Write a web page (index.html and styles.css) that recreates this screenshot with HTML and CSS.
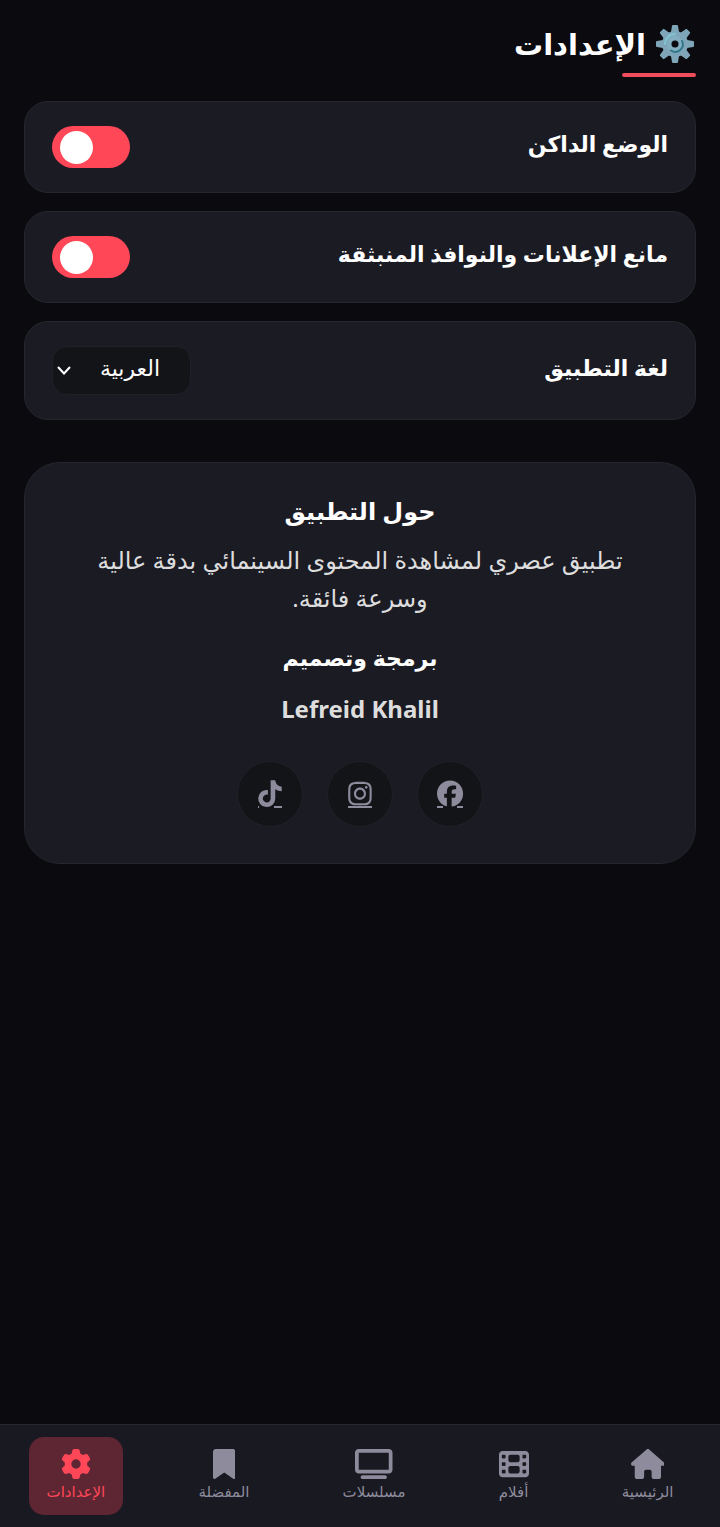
FILE: index.html
```html
<!DOCTYPE html>
<html lang="ar" dir="rtl">
<head>
    <meta charset="UTF-8">
    <meta name="viewport" content="width=device-width, initial-scale=1.0">
    <title>الإعدادات</title>
    <link rel="stylesheet" href="styles.css">
</head>
<body>
    <main class="page">
        <h1 class="page-title">
            <svg class="title-icon" viewBox="0 0 38 38" aria-hidden="true">
                <g fill="#7fa6b8">
                    <circle cx="19" cy="19" r="13"/>
                    <path id="tooth" d="M15 7L16 1Q16 0 17 0H21Q22 0 22 1L23 7V31L22 37Q22 38 21 38H17Q16 38 16 37L15 31Z"/>
                    <use href="#tooth" transform="rotate(45 19 19)"/>
                    <use href="#tooth" transform="rotate(90 19 19)"/>
                    <use href="#tooth" transform="rotate(135 19 19)"/>
                </g>
                <path d="M9 19A10 10 0 0 1 19 9" fill="none" stroke="#82c4d3" stroke-width="2" stroke-linecap="round"/>
                <circle cx="19" cy="19" r="6" fill="none" stroke="#82aebf" stroke-width="4"/>
                <path d="M26 16A7.500 7.500 0 0 1 15 25.500" fill="none" stroke="#2f7889" stroke-width="2" stroke-linecap="round"/>
                <circle cx="19" cy="19" r="3.500" fill="#0a0a0f"/>
            </svg>
            <span>الإعدادات</span>
        </h1>

        <!-- Settings list -->
        <section class="settings">
            <div class="setting-item">
                <label class="setting-label" for="darkMode">الوضع الداكن</label>
                <input class="toggle" type="checkbox" id="darkMode" checked>
            </div>
            <div class="setting-item">
                <label class="setting-label" for="adBlock">مانع الإعلانات والنوافذ المنبثقة</label>
                <input class="toggle" type="checkbox" id="adBlock" checked>
            </div>
            <div class="setting-item">
                <label class="setting-label" for="language">لغة التطبيق</label>
                <div class="select-wrap">
                    <select class="language-select" id="language">
                        <option selected>العربية</option>
                        <option>English</option>
                    </select>
                    <svg class="select-arrow" viewBox="0 0 14 9" aria-hidden="true">
                        <path d="M1 1L7 7.500L13 1" fill="none" stroke="currentColor" stroke-width="2"/>
                    </svg>
                </div>
            </div>
        </section>

        <!-- About -->
        <section class="about">
            <h2 class="about-title">حول التطبيق</h2>
            <p class="about-text">تطبيق عصري لمشاهدة المحتوى السينمائي بدقة عالية وسرعة فائقة.</p>
            <h3 class="about-credit">برمجة وتصميم</h3>
            <p class="about-author" dir="ltr">Lefreid Khalil</p>
            <div class="social">
                <a class="social-link" href="#" aria-label="Facebook">
                    <svg width="28" height="28" viewBox="0 0 28 28">
                        <path transform="translate(1 .6) scale(.051)" d="M512 256C512 114.600 397.400 0 256 0S0 114.600 0 256C0 376 82.700 476.800 194.200 504.500V334.200H141.400V256h52.800V222.300c0-87.100 39.400-127.500 125-127.500c16.200 0 44.200 3.200 55.700 6.400V172c-6-.6-16.500-1-29.600-1c-42 0-58.200 15.900-58.200 57.200V256h83.600l-14.400 78.200H287V510.100C413.800 494.800 512 386.900 512 256z"/>
                        <path d="M1 26h6v2H1zM21 26h6v2h-6z"/>
                    </svg>
                </a>
                <a class="social-link" href="#" aria-label="Instagram">
                    <svg width="28" height="28" viewBox="0 0 28 28">
                        <path transform="translate(2.200 .2) scale(.0525)" d="M224.100 141c-63.600 0-114.900 51.300-114.900 114.900s51.300 114.900 114.900 114.900S339 319.500 339 255.900 287.700 141 224.100 141zm0 189.600c-41.100 0-74.700-33.500-74.700-74.700s33.500-74.700 74.700-74.700 74.700 33.500 74.700 74.700-33.600 74.700-74.700 74.700zm146.400-194.300c0 14.900-12 26.800-26.800 26.800-14.900 0-26.800-12-26.800-26.800s12-26.800 26.800-26.800 26.800 12 26.800 26.800zm76.100 27.200c-1.700-35.900-9.900-67.700-36.200-93.900-26.200-26.200-58-34.400-93.900-36.200-37-2.100-147.900-2.100-184.900 0-35.800 1.700-67.600 9.900-93.900 36.100s-34.400 58-36.200 93.900c-2.100 37-2.100 147.900 0 184.900 1.700 35.900 9.900 67.700 36.200 93.900s58 34.400 93.900 36.200c37 2.100 147.900 2.100 184.900 0 35.900-1.700 67.700-9.900 93.900-36.200 26.200-26.200 34.400-58 36.200-93.900 2.100-37 2.100-147.800 0-184.800zM398.800 388c-7.800 19.600-22.900 34.700-42.600 42.600-29.500 11.700-99.500 9-132.100 9s-102.700 2.600-132.100-9c-19.600-7.800-34.700-22.900-42.600-42.600-11.700-29.500-9-99.500-9-132.100s-2.600-102.700 9-132.100c7.800-19.600 22.900-34.700 42.600-42.600 29.500-11.700 99.500-9 132.100-9s102.700-2.600 132.100 9c19.600 7.800 34.700 22.900 42.600 42.600 11.700 29.500 9 99.500 9 132.100s2.700 102.700-9 132.100z"/>
                        <path d="M2 26h24v2H2z"/>
                    </svg>
                </a>
                <a class="social-link" href="#" aria-label="TikTok">
                    <svg width="28" height="28" viewBox="0 0 28 28">
                        <path transform="translate(2.200 .2) scale(.0525)" d="M448 209.900a210.100 210.100 0 0 1 -122.800-39.300V349.400A162.600 162.600 0 1 1 185 188.300V278.200a74.600 74.600 0 1 0 52.200 71.200V0l88 0a121.200 121.200 0 0 0 1.900 22.200h0A122.200 122.200 0 0 0 381 102.400a121.400 121.400 0 0 0 67 20.100z"/>
                        <path d="M2 26h1v2H2zM18 26h8v2h-8z"/>
                    </svg>
                </a>
            </div>
        </section>
    </main>

    <!-- Bottom navigation -->
    <nav class="bottom-nav">
        <a class="nav-item" href="#">
            <svg class="nav-icon" viewBox="0 0 576 512"><path d="M575.800 255.500c0 18-15 32.100-32 32.100h-32l.7 160.200c0 2.700-.2 5.400-.5 8.100V472c0 22.100-17.900 40-40 40H392c-22.100 0-40-17.900-40-40V384c0-17.700-14.300-32-32-32H256c-17.700 0-32 14.300-32 32v88c0 22.100-17.900 40-40 40H104c-22.100 0-40-17.900-40-40V287.600H32c-18 0-32-14-32-32.100c0-9 3-17 10-24L266.400 8c7-7 15-8 22-8s15 2 21 7L564.800 231.500c8 7 12 15 11 24z"/></svg>
            <span>الرئيسية</span>
        </a>
        <a class="nav-item" href="#">
            <svg class="nav-icon" viewBox="0 0 512 512"><path d="M0 96C0 60.700 28.700 32 64 32H448c35.300 0 64 28.700 64 64V416c0 35.300-28.700 64-64 64H64c-35.300 0-64-28.700-64-64V96zM48 368v32c0 8.800 7.200 16 16 16H96c8.800 0 16-7.200 16-16V368c0-8.800-7.200-16-16-16H64c-8.800 0-16 7.200-16 16zm368-16c-8.800 0-16 7.200-16 16v32c0 8.800 7.200 16 16 16h32c8.800 0 16-7.200 16-16V368c0-8.800-7.200-16-16-16H416zM48 240v32c0 8.800 7.200 16 16 16H96c8.800 0 16-7.200 16-16V240c0-8.800-7.200-16-16-16H64c-8.800 0-16 7.200-16 16zm368-16c-8.800 0-16 7.200-16 16v32c0 8.800 7.200 16 16 16h32c8.800 0 16-7.200 16-16V240c0-8.800-7.200-16-16-16H416zM48 112v32c0 8.800 7.200 16 16 16H96c8.800 0 16-7.200 16-16V112c0-8.800-7.200-16-16-16H64c-8.800 0-16 7.200-16 16zM416 96c-8.800 0-16 7.200-16 16v32c0 8.800 7.200 16 16 16h32c8.800 0 16-7.200 16-16V112c0-8.800-7.200-16-16-16H416zM160 128v64c0 17.700 14.300 32 32 32H320c17.700 0 32-14.300 32-32V128c0-17.700-14.300-32-32-32H192c-17.700 0-32 14.300-32 32zm32 160c-17.700 0-32 14.300-32 32v64c0 17.700 14.300 32 32 32H320c17.700 0 32-14.300 32-32V320c0-17.700-14.300-32-32-32H192z"/></svg>
            <span>أفلام</span>
        </a>
        <a class="nav-item" href="#">
            <svg class="nav-icon" viewBox="0 0 640 512"><path d="M64 64V352H576V64H64zM0 64C0 28.700 28.700 0 64 0H576c35.300 0 64 28.700 64 64V352c0 35.300-28.700 64-64 64H64c-35.300 0-64-28.700-64-64V64zM128 448H512c17.700 0 32 14.300 32 32s-14.300 32-32 32H128c-17.700 0-32-14.300-32-32s14.300-32 32-32z"/></svg>
            <span>مسلسلات</span>
        </a>
        <a class="nav-item" href="#">
            <svg class="nav-icon" viewBox="0 0 384 512"><path d="M0 48V487.700C0 501.100 10.900 512 24.300 512c5 0 9.900-1.500 14-4.400L192 400 345.700 507.600c4.100 2.900 9 4.400 14 4.400c13.400 0 24.300-10.900 24.300-24.300V48c0-26.500-21.500-48-48-48H48C21.500 0 0 21.500 0 48z"/></svg>
            <span>المفضلة</span>
        </a>
        <a class="nav-item active" href="#" aria-current="page">
            <svg class="nav-icon" viewBox="0 0 512 512"><path d="M495.900 166.600c3.200 8.700 .5 18.400-6.400 24.600l-43.300 39.400c1.100 8.300 1.700 16.800 1.700 25.400s-.6 17.100-1.700 25.400l43.300 39.400c6.900 6.200 9.600 15.900 6.400 24.600c-4.400 11.900-9.700 23.300-15.800 34.300l-4.700 8.100c-6.600 11-14 21.400-22.100 31.200c-5.900 7.200-15.700 9.600-24.500 6.800l-55.700-17.700c-13.400 10.300-28.200 18.900-44 25.400l-12.500 57.100c-2 9.100-9 16.300-18.200 17.800c-13.800 2.300-28 3.500-42.500 3.500s-28.700-1.200-42.500-3.500c-9.200-1.500-16.200-8.700-18.200-17.800l-12.500-57.100c-15.800-6.500-30.600-15.100-44-25.400L83.100 425.900c-8.800 2.800-18.600 .3-24.500-6.800c-8.100-9.800-15.500-20.200-22.100-31.200l-4.700-8.100c-6.100-11-11.400-22.400-15.800-34.300c-3.200-8.700-.5-18.400 6.400-24.600l43.300-39.400C64.600 273.100 64 264.600 64 256s.6-17.100 1.700-25.400L22.400 191.200c-6.900-6.200-9.600-15.900-6.400-24.600c4.400-11.900 9.700-23.300 15.800-34.300l4.700-8.100c6.600-11 14-21.400 22.100-31.200c5.900-7.200 15.700-9.600 24.500-6.800l55.700 17.700c13.400-10.300 28.200-18.900 44-25.400l12.500-57.100c2-9.100 9-16.300 18.200-17.800C227.300 1.200 241.500 0 256 0s28.700 1.200 42.500 3.500c9.200 1.500 16.200 8.700 18.200 17.800l12.500 57.100c15.800 6.500 30.600 15.100 44 25.400l55.700-17.700c8.800-2.800 18.600-.3 24.500 6.800c8.100 9.800 15.500 20.200 22.100 31.200l4.700 8.100c6.100 11 11.400 22.400 15.800 34.300zM256 336a80 80 0 1 0 0-160 80 80 0 1 0 0 160z"/></svg>
            <span>الإعدادات</span>
        </a>
    </nav>
</body>
</html>
```
FILE: styles.css
```css
:root {
    --bg: #0a0a0f;
    --card: #1b1b24;
    --field: #131418;
    --border: #26262e;
    --accent: #ff4757;
    --muted: #8d8b9c;
}

* {
    box-sizing: border-box;
    margin: 0;
    padding: 0;
}

body {
    min-height: 100vh;
    display: flex;
    flex-direction: column;
    background: var(--bg);
    color: #ffffff;
    font-family: "Noto Sans", "DejaVu Sans", sans-serif;
}

.page {
    flex: 1;
    padding: 24px;
}

/* Page title */
.page-title {
    display: flex;
    align-items: center;
    gap: 10px;
    height: 53px;
    padding-bottom: 13px;
    margin-bottom: 24px;
    position: relative;
    font-size: 29px;
    line-height: 40px;
}

.page-title::after {
    content: "";
    position: absolute;
    right: 0;
    bottom: 0;
    width: 74px;
    height: 4px;
    border-radius: 2px;
    background: #f04d5c;
}

.title-icon {
    width: 38px;
    height: 38px;
    margin-right: 2px;
}

/* Settings */
.settings {
    display: flex;
    flex-direction: column;
    gap: 18px;
    margin-bottom: 42px;
}

.setting-item {
    display: flex;
    align-items: center;
    justify-content: space-between;
    padding: 24px 27px;
    background: var(--card);
    border: 1px solid var(--border);
    border-radius: 24px;
}

.setting-label {
    padding-bottom: 8px;
    font-size: 22px;
    line-height: 32px;
    font-weight: bold;
}

.toggle {
    appearance: none;
    display: flex;
    align-items: center;
    justify-content: flex-end;
    width: 78px;
    height: 42px;
    padding: 0 8px;
    border-radius: 21px;
    background: var(--accent);
    cursor: pointer;
}

.toggle::before {
    content: "";
    width: 33px;
    height: 33px;
    border-radius: 50%;
    background: #ffffff;
}

.toggle:not(:checked) {
    justify-content: flex-start;
    background: #33333d;
}

.select-wrap {
    position: relative;
}

.language-select {
    appearance: none;
    display: block;
    width: 139px;
    height: 49px;
    padding: 0 30px 8px 24px;
    border: 1px solid #202127;
    border-radius: 15px;
    background: var(--field);
    color: #ffffff;
    font-family: inherit;
    font-size: 22px;
}

.select-arrow {
    position: absolute;
    left: 5px;
    top: 20px;
    width: 14px;
    height: 9px;
    pointer-events: none;
}

/* About */
.about {
    padding: 32px 48px 36px;
    background: var(--card);
    border: 1px solid var(--border);
    border-radius: 36px;
    text-align: center;
}

.about-title {
    margin-bottom: 14px;
    font-size: 24px;
    line-height: 32px;
}

.about-text {
    margin-bottom: 24px;
    color: #dddddd;
    font-size: 24px;
    line-height: 38px;
}

.about-credit {
    margin-bottom: 20px;
    font-size: 22px;
    line-height: 32px;
}

.about-author {
    margin-bottom: 36px;
    color: #dddddd;
    font-size: 24px;
    line-height: 32px;
    font-weight: bold;
}

.social {
    display: flex;
    justify-content: center;
    gap: 24px;
}

.social-link {
    display: flex;
    align-items: center;
    justify-content: center;
    width: 66px;
    height: 66px;
    border: 1px solid #202127;
    border-radius: 50%;
    background: var(--field);
    fill: var(--muted);
}

/* Bottom navigation */
.bottom-nav {
    position: sticky;
    bottom: 0;
    display: flex;
    justify-content: space-around;
    padding: 12px 0;
    background: #191921;
    border-top: 1px solid #292930;
}

.nav-item {
    display: flex;
    flex-direction: column;
    align-items: center;
    height: 78px;
    padding: 12px 18px;
    border-radius: 15px;
    color: var(--muted);
    fill: currentColor;
    font-size: 15px;
    line-height: 24px;
    text-decoration: none;
}

.nav-item.active {
    background: #5e2632;
    color: var(--accent);
}

.nav-icon {
    height: 30px;
}
```
